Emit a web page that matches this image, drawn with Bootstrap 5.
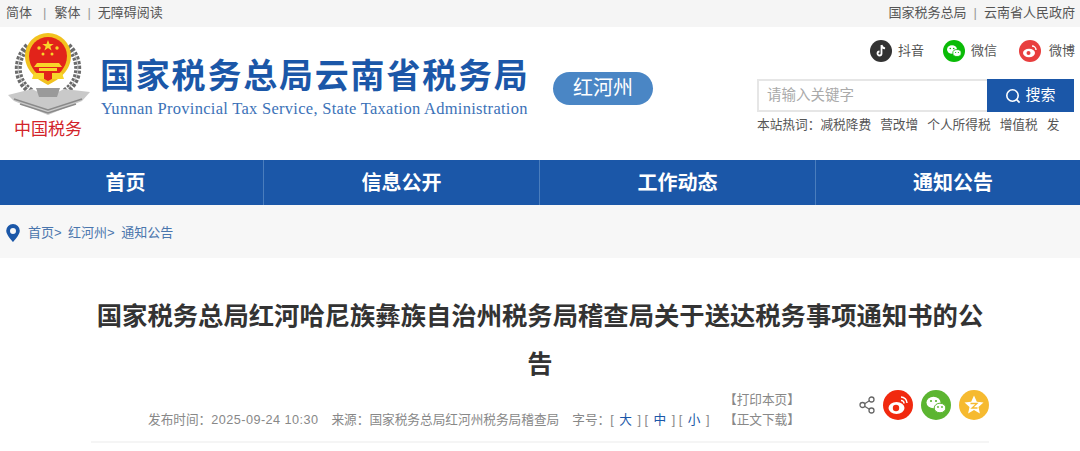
<!DOCTYPE html>
<html lang="zh">
<head>
<meta charset="UTF-8">
<title>国家税务总局云南省税务局</title>
<link rel="stylesheet" href="https://cdn.jsdelivr.net/npm/bootstrap@5.3.3/dist/css/bootstrap.min.css">
<style>
body { font-family: "Liberation Sans", "Noto Sans CJK SC", sans-serif; font-size: 13px; color: #555; background: #fff; overflow: hidden; }
a { color: inherit; text-decoration: none; }
.topbar { height: 27px; background: #f5f5f5; padding: 0 5px 0 6px; line-height: 25px; color: #555; font-size: 13px; }
.topbar .sep { color: #999; margin: 0 8px 0 11px; }
.topbar .sep2 { color: #999; margin: 0 7px; }
.head-area { height: 133px; padding: 0 5px 0 8px; }
.emblem { width: 84px; height: 112px; margin-top: 5px; flex: none; }
.site-cn { font-size: 34px; font-weight: 700; color: #1b57a8; letter-spacing: 1.8px; line-height: 40px; margin-top: 29px; white-space: nowrap; }
.site-en { font-family: "Liberation Serif", serif; font-size: 16.5px; color: #3c72b8; line-height: 18px; margin-top: 4px; margin-left: 1px; white-space: nowrap; letter-spacing: .28px; }
.title-col { margin-left: 8px; width: 430px; }
.city-pill { width: 100px; height: 33px; background: #4a86c5; color: #fff; border-radius: 17px; font-size: 20px; text-align: center; line-height: 33px; margin-left: 23px; margin-top: 45px; }
.right-col { width: 318px; margin-left: auto; padding-right: 1px; }
.social-row { height: 50px; padding-top: 13px; justify-content: flex-end; gap: 19px; font-size: 13px; margin-right: -1px; }
.social-row a:last-child { margin-left: 3px; }
.social-ico { width: 22px; height: 22px; display: block; margin-right: 6px; }
.social-row a:last-child .social-ico { margin-right: 8px; }
.search-box { height: 33px; margin-top: 2px; }
.search-input { flex: 1; border: 2px solid #e6e6e6; border-right: 0; height: 33px; padding: 0 8px; font-size: 14.500px; color: #aaa; line-height: 28px; }
.search-btn { width: 87px; height: 33px; background: #1b57a8; color: #fff; font-size: 15px; border: 0; gap: 4px; }
.hotwords { margin-top: 4px; font-size: 12.700px; color: #555; white-space: nowrap; gap: 9px; }
.main-menu { height: 45px; background: #1b57a8; }
.menu-cell { width: 276px; text-align: center; color: #fff; font-size: 20px; font-weight: 700; line-height: 47px; border-right: 1px solid #4a7dbd; }
.menu-cell:first-child { width: 264px; padding-right: 12px; }
.menu-cell:last-child { border-right: 0; flex: 1; padding-left: 10px; }
.crumb-bar { height: 53px; background: #f7f7f7; padding: 2px 0 0 6px; color: #4a76ad; font-size: 13px; }
.crumb-bar svg { margin-right: 8px; }
.crumb-bar span { margin-right: 6.500px; }
.doc-title { font-size: 25.330px; font-weight: 700; color: #333; text-align: center; line-height: 48px; margin: 34px auto 0; width: 900px; }
.meta-row { width: 898px; height: 55px; margin-left: 91px; border-bottom: 2px solid #f5f5f5; position: relative; font-size: 12.670px; color: #888; }
.meta-line { position: absolute; left: 57px; top: 23px; white-space: nowrap; }
.meta-line > span { margin-right: 13px; }
.date-num { letter-spacing: .45px; }
.size-link { color: #1b57a8; margin: 0 2px; }
.tools { position: absolute; left: 633px; top: 2px; line-height: 20px; color: #888; }
.share-ico { position: absolute; left: 768px; top: 2px; gap: 8px; }
.round-ico { width: 30px; height: 30px; display: block; }
</style>
</head>
<body>
<div class="topbar d-flex justify-content-between">
  <div><a href="#">简体</a><span class="sep">|</span><a href="#">繁体</a><span class="sep2">|</span><a href="#">无障碍阅读</a></div>
  <div><a href="#">国家税务总局</a><span class="sep2">|</span><a href="#">云南省人民政府</a></div>
</div>

<div class="head-area d-flex">
  <svg class="emblem" viewBox="0 0 84 112">
    <!-- wreath -->
    <path d="M20 14C6 28 7 50 24 60M60 14C74 28 73 50 56 60" stroke="#6b6b6b" stroke-width="7" fill="none" stroke-dasharray="3 1.500"/>
    <path d="M15 20C7 32 9 48 20 56M65 20C73 32 71 48 60 56" stroke="#ccc" stroke-width="1" fill="none"/>
    <!-- ribbon -->
    <path d="M0 63l24-6 16 8 16-8 26 3-8 9-34 14-34-14z" fill="#c9c9c9"/>
    <path d="M6 67l34 11 34-11M12 72l28 9 28-9" stroke="#8a8a8a" stroke-width="1.500" fill="none"/>
    <path d="M28 56h24l-3 9H31z" fill="#9a9a9a"/>
    <!-- disc -->
    <path d="M40 1a23 23 0 0 1 23 23c0 14-11 23-23 29C28 47 17 38 17 24A23 23 0 0 1 40 1z" fill="#f2c21f"/>
    <path d="M40 5a19 19 0 0 1 19 19c0 12-9 20-19 25C30 44 21 36 21 24A19 19 0 0 1 40 5z" fill="#e2231a"/>
    <path d="M40 8l1.500 4h4.200l-3.400 2.500 1.300 4-3.600-2.500-3.600 2.500 1.300-4-3.400-2.500h4.200z" fill="#f8d62a"/>
    <g fill="#f8d62a"><circle cx="31" cy="16" r="1.700"/><circle cx="49" cy="16" r="1.700"/><circle cx="35" cy="22" r="1.500"/><circle cx="44" cy="22" r="1.500"/></g>
    <path d="M29 31h22l3 4H26z" fill="#f8d62a"/>
    <path d="M31 36h18v3H31zM26 41h28l2 6H24z" fill="#f8d62a"/>
    <path d="M36 41h8v6h-8z" fill="#e2231a"/>
    <text x="40" y="103" text-anchor="middle" font-size="17" fill="#d2232a" font-family="Noto Sans CJK SC">中国税务</text>
  </svg>
  <div class="title-col">
    <div class="site-cn">国家税务总局云南省税务局</div>
    <div class="site-en">Yunnan Provincial Tax Service, State Taxation Administration</div>
  </div>
  <div class="city-pill">红河州</div>
  <div class="right-col">
    <div class="social-row d-flex align-items-start">
      <a class="d-flex align-items-center" href="#">
        <svg class="social-ico" viewBox="0 0 22 22"><circle cx="11" cy="11" r="11" fill="#333"/><path d="M11.500 5v8.500a2 2 0 1 1-2-2M11.500 5c.3 2 1.600 3.200 3.600 3.400" stroke="#fff" stroke-width="1.800" fill="none"/></svg>抖音</a>
      <a class="d-flex align-items-center" href="#">
        <svg class="social-ico" viewBox="0 0 22 22"><circle cx="11" cy="11" r="11" fill="#0abb07"/><ellipse cx="9" cy="9.500" rx="5" ry="4.200" fill="#fff"/><ellipse cx="14" cy="13" rx="4.200" ry="3.500" fill="#fff" stroke="#0abb07" stroke-width=".8"/><circle cx="7.300" cy="8.500" r=".8" fill="#0abb07"/><circle cx="10.700" cy="8.500" r=".8" fill="#0abb07"/><circle cx="12.600" cy="12.500" r=".6" fill="#0abb07"/><circle cx="15.400" cy="12.500" r=".6" fill="#0abb07"/></svg>微信</a>
      <a class="d-flex align-items-center" href="#">
        <svg class="social-ico" viewBox="0 0 22 22"><circle cx="11" cy="11" r="11" fill="#e83e3e"/><ellipse cx="10" cy="13" rx="6" ry="4.200" fill="#fff"/><circle cx="9.500" cy="13" r="2" fill="#e83e3e"/><path d="M13 6a4 4 0 0 1 4 4" stroke="#fff" stroke-width="1.400" fill="none"/></svg>微博</a>
    </div>
    <div class="search-box d-flex">
      <div class="search-input">请输入关键字</div>
      <button class="search-btn d-flex align-items-center justify-content-center">
        <svg width="16" height="16" viewBox="0 0 16 16"><circle cx="7.500" cy="7.500" r="5.700" stroke="#fff" stroke-width="1.600" fill="none"/><path d="M11.600 11.600l3 3" stroke="#fff" stroke-width="1.600"/></svg>搜索
      </button>
    </div>
    <div class="hotwords d-flex"><span>本站热词：减税降费</span><span>营改增</span><span>个人所得税</span><span>增值税</span><span>发</span></div>
  </div>
</div>

<div class="main-menu d-flex">
  <a class="menu-cell" href="#">首页</a>
  <a class="menu-cell" href="#">信息公开</a>
  <a class="menu-cell" href="#">工作动态</a>
  <a class="menu-cell" href="#">通知公告</a>
</div>

<div class="crumb-bar d-flex align-items-center">
  <svg width="14" height="18" viewBox="0 0 14 18"><path fill-rule="evenodd" d="M7 0a6.800 6.800 0 0 1 6.800 6.800C13.800 11 7 18 7 18S.2 11 .2 6.800A6.800 6.800 0 0 1 7 0zm0 4a3 3 0 1 0 0 6 3 3 0 0 0 0-6z" fill="#1b57a8"/></svg>
  <span>首页&gt;</span><span>红河州&gt;</span><span>通知公告</span>
</div>

<div class="doc-title">国家税务总局红河哈尼族彝族自治州税务局稽查局关于送达税务事项通知书的公告</div>

<div class="meta-row">
  <div class="meta-line"><span>发布时间：<span class="date-num">2025-09-24 10:30</span></span><span>来源：国家税务总局红河州税务局稽查局</span><span>字号：[ <a class="size-link" href="#">大</a> ] [ <a class="size-link" href="#">中</a> ] [ <a class="size-link" href="#">小</a> ]</span></div>
  <div class="tools"><div>【打印本页】</div><div>【正文下载】</div></div>
  <div class="share-ico d-flex align-items-center">
    <svg width="16" height="18" viewBox="0 0 16 18" fill="none" stroke="#666" stroke-width="1.300"><circle cx="3.500" cy="9" r="2.500"/><circle cx="12.500" cy="3.500" r="2.500"/><circle cx="12.500" cy="14.500" r="2.500"/><path d="M5.600 7.700l4.800-3M5.600 10.300l4.800 3"/></svg>
    <svg class="round-ico" viewBox="0 0 30 30"><circle cx="15" cy="15" r="15" fill="#f1290f"/><ellipse cx="13.500" cy="18" rx="8" ry="6" fill="#fff"/><circle cx="13" cy="18" r="3.200" fill="#f1290f"/><path d="M18 7a6 6 0 0 1 6 6M18 10.500a2.800 2.800 0 0 1 3 3" stroke="#fff" stroke-width="1.500" fill="none"/></svg>
    <svg class="round-ico" viewBox="0 0 30 30"><circle cx="15" cy="15" r="15" fill="#5cb531"/><ellipse cx="12.500" cy="12.500" rx="7" ry="5.800" fill="#fff"/><ellipse cx="19" cy="18" rx="5.800" ry="4.800" fill="#fff" stroke="#5cb531"/><circle cx="10" cy="11" r="1.100" fill="#5cb531"/><circle cx="15" cy="11" r="1.100" fill="#5cb531"/><circle cx="17" cy="17" r=".9" fill="#5cb531"/><circle cx="21" cy="17" r=".9" fill="#5cb531"/></svg>
    <svg class="round-ico" viewBox="0 0 30 30"><circle cx="15" cy="15" r="15" fill="#f6ba30"/><path d="M15 5.500l2.800 6.200 6.700.7-5 4.500 1.400 6.600-5.900-3.400-5.900 3.400 1.400-6.600-5-4.500 6.700-.7z" fill="#fff"/><path d="M11.500 13.500h6.500l-5 4.500h5.500" stroke="#f6ba30" stroke-width="1.300" fill="none"/></svg>
  </div>
</div>
</body>
</html>
